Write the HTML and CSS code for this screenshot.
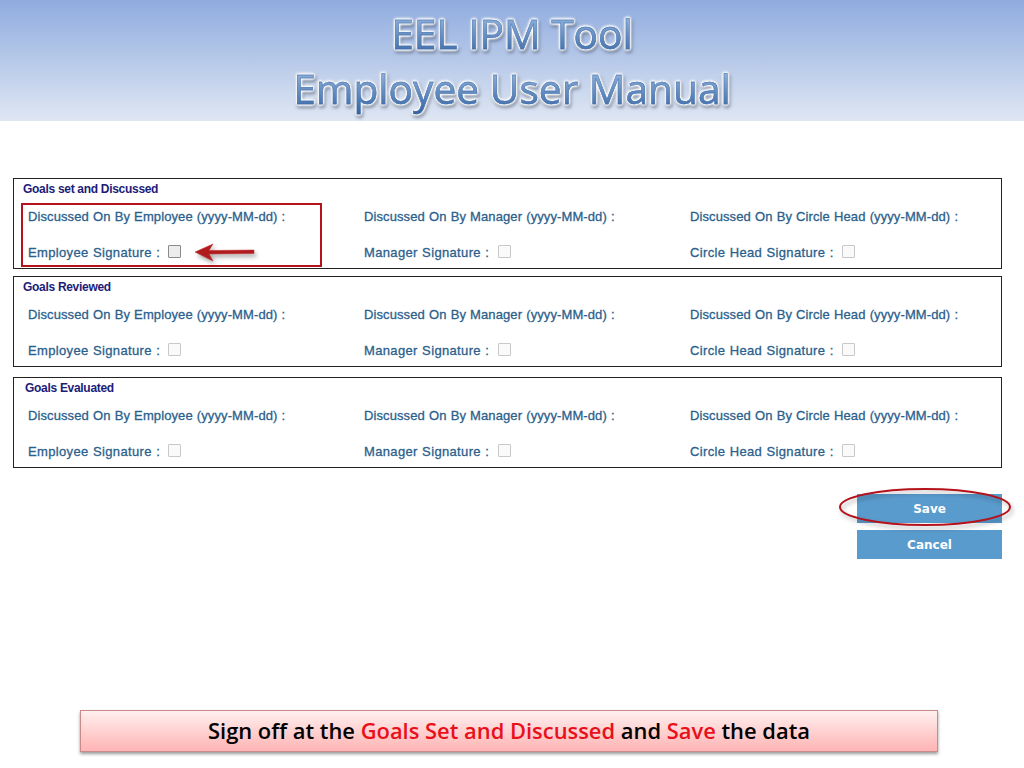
FILE: index.html
```html
<!DOCTYPE html>
<html lang="en">
<head>
    <meta charset="UTF-8">
    <meta name="viewport" content="width=device-width, initial-scale=1.0">
    <title>EEL IPM Tool - Employee User Manual</title>
    <link rel="stylesheet" href="styles.css">
</head>
<body>
    <header class="banner">
        <h1 class="banner-title">EEL IPM Tool</h1>
        <h1 class="banner-title">Employee User Manual</h1>
    </header>

    <main class="content">
        <section class="panel">
            <h2 class="panel-title">Goals set and Discussed</h2>
            <div class="sign-grid">
                <span class="field">Discussed On By Employee (yyyy-MM-dd) :</span>
                <span class="field">Discussed On By Manager (yyyy-MM-dd) :</span>
                <span class="field">Discussed On By Circle Head (yyyy-MM-dd) :</span>
                <span class="field field-sign">Employee Signature : <i class="check check-active"></i></span>
                <span class="field field-sign">Manager Signature : <i class="check"></i></span>
                <span class="field field-sign">Circle Head Signature : <i class="check"></i></span>
            </div>
        </section>

        <section class="panel panel-second">
            <h2 class="panel-title">Goals Reviewed</h2>
            <div class="sign-grid">
                <span class="field">Discussed On By Employee (yyyy-MM-dd) :</span>
                <span class="field">Discussed On By Manager (yyyy-MM-dd) :</span>
                <span class="field">Discussed On By Circle Head (yyyy-MM-dd) :</span>
                <span class="field field-sign">Employee Signature : <i class="check"></i></span>
                <span class="field field-sign">Manager Signature : <i class="check"></i></span>
                <span class="field field-sign">Circle Head Signature : <i class="check"></i></span>
            </div>
        </section>

        <section class="panel panel-third">
            <h2 class="panel-title">Goals Evaluated</h2>
            <div class="sign-grid">
                <span class="field">Discussed On By Employee (yyyy-MM-dd) :</span>
                <span class="field">Discussed On By Manager (yyyy-MM-dd) :</span>
                <span class="field">Discussed On By Circle Head (yyyy-MM-dd) :</span>
                <span class="field field-sign">Employee Signature : <i class="check"></i></span>
                <span class="field field-sign">Manager Signature : <i class="check"></i></span>
                <span class="field field-sign">Circle Head Signature : <i class="check"></i></span>
            </div>
        </section>

        <div class="actions">
            <button class="btn">Save</button>
            <button class="btn">Cancel</button>
        </div>
    </main>

    <div class="note">
        <p>Sign off at the <b>Goals Set and Discussed</b> and <b>Save</b> the data</p>
    </div>

    <!-- callouts drawn over the screenshot -->
    <div class="callout-box"></div>
    <svg class="callout-arrow" width="72" height="24" viewBox="0 0 72 24">
        <path d="M3 11 L21 3 L17 9.5 L62 9 L62 12.5 L17 13 L21 20 Z" fill="#b01c1e" stroke="#c0282a" stroke-width="0.5"/>
    </svg>
    <svg class="callout-ring" width="180" height="44" viewBox="0 0 180 44">
        <ellipse cx="88" cy="20" rx="85" ry="18" fill="none" stroke="#b5121b" stroke-width="2"/>
    </svg>
</body>
</html>
```

FILE: styles.css
```css
body {
    margin: 0;
    height: 768px;
    overflow: hidden;
    position: relative;
    background-color: white;
    font-family: "Liberation Sans", Arial, sans-serif;
}

.banner {
    height: 121px;
    box-sizing: border-box;
    padding-top: 6px;
    background: linear-gradient(to bottom, #8fabdf, #dfe7f3);
    text-align: center;
}
.banner-title {
    margin: 0;
    height: 55px;
    font-family: "Open Sans", sans-serif;
    font-size: 40.7px;
    line-height: 55px;
    font-weight: 400;
    color: #3f6ead;
    background: linear-gradient(to bottom, #a9c6ea, #2f5f9f);
    -webkit-background-clip: text;
    background-clip: text;
    -webkit-text-fill-color: transparent;
    -webkit-text-stroke: 0.4px #3b6aa8;
    filter: drop-shadow(0 0 1px white) drop-shadow(0 0 1px white) drop-shadow(0 0 1px white) drop-shadow(1px 2px 1px rgba(40, 50, 70, 0.5));
}

.content {
    padding: 57px 22px 0 13px;
}

.panel {
    height: 91px;
    box-sizing: border-box;
    border: 1px solid #222;
    padding: 3px 9px 0 9px;
}
.panel-second {
    margin-top: 7px;
}
.panel-third {
    margin-top: 10px;
}
.panel-third .panel-title {
    padding-left: 2px;
}
.panel-title {
    margin: 0;
    font-size: 12px;
    line-height: 14px;
    font-weight: bold;
    letter-spacing: -0.3px;
    color: #1c1c78;
}

.sign-grid {
    display: grid;
    grid-template-columns: 336px 326px 1fr;
    grid-template-rows: 36px 36px;
    margin-top: 12px;
    padding-left: 5px;
}
.field {
    display: flex;
    align-items: center;
    gap: 4px;
    height: 16px;
    font-size: 13px;
    letter-spacing: 0.1px;
    word-spacing: 0.4px;
    color: #2c5f8c;
    white-space: pre;
    -webkit-text-stroke: 0.3px #2c5f8c;
}
.field-sign {
    letter-spacing: 0.35px;
}

.check {
    display: inline-block;
    width: 11px;
    height: 11px;
    margin-top: -1px;
    border: 1px solid #c8c8c8;
    border-radius: 1px;
    background-color: #fafafa;
}
.check-active {
    border-color: #8a8a8a;
    background-color: #ececec;
}

.actions {
    display: flex;
    flex-direction: column;
    align-items: flex-end;
    gap: 7px;
    margin-top: 26px;
}
.btn {
    width: 145px;
    height: 29px;
    padding: 0;
    border: none;
    background-color: #5a9bcd;
    color: white;
    font-family: "DejaVu Sans", sans-serif;
    font-size: 12px;
    font-weight: bold;
}

.note {
    position: absolute;
    left: 80px;
    top: 710px;
    width: 858px;
    height: 42px;
    box-sizing: border-box;
    padding-bottom: 2px;
    border: 1px solid #c98a8a;
    background: linear-gradient(to bottom, #fff0f0, #ffb4b4);
    box-shadow: 0 2px 3px rgba(0, 0, 0, 0.4);
    display: flex;
    justify-content: center;
    align-items: center;
}
.note p {
    margin: 0;
    font-family: "Open Sans", sans-serif;
    font-size: 21.9px;
    font-weight: 600;
    color: black;
}
.note b {
    font-weight: 600;
    color: #e8101a;
}

.callout-box {
    position: absolute;
    left: 21px;
    top: 203px;
    width: 297px;
    height: 60px;
    border: 2px solid #b5121b;
}
.callout-arrow {
    position: absolute;
    left: 192px;
    top: 241px;
    filter: drop-shadow(2px 3px 2px rgba(0, 0, 0, 0.35));
}
.callout-ring {
    position: absolute;
    left: 837px;
    top: 487px;
    filter: drop-shadow(2px 3px 2px rgba(0, 0, 0, 0.3));
}
```
